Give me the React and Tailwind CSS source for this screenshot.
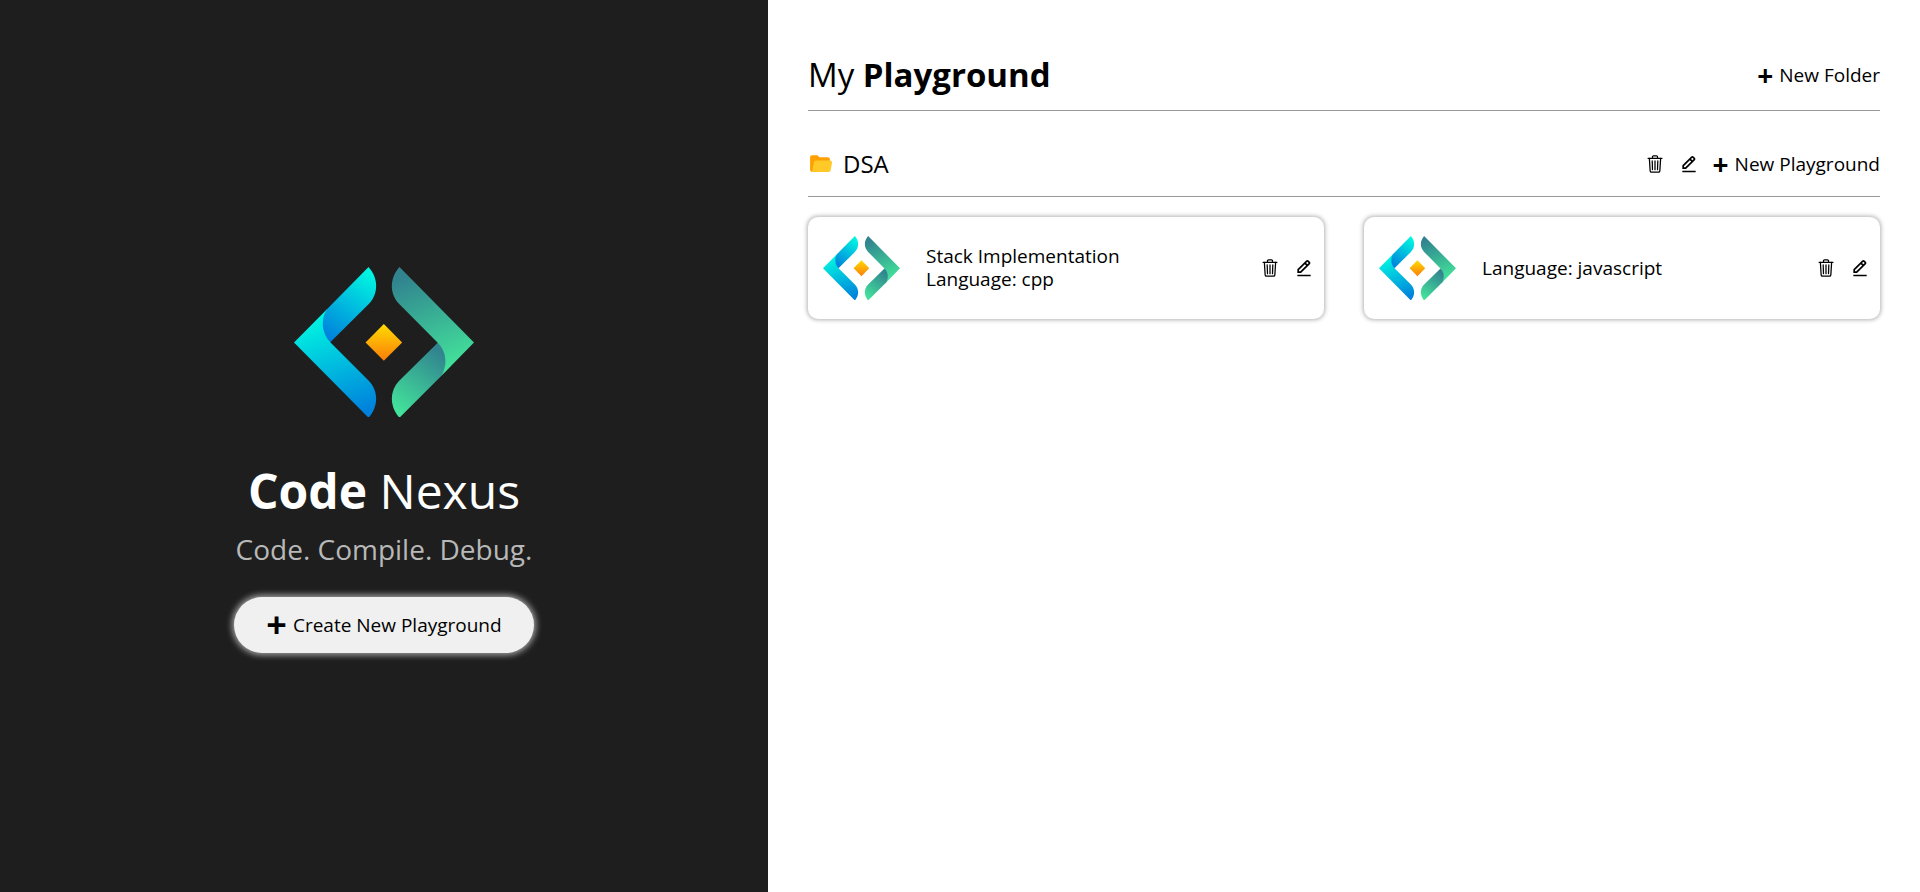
import { useId } from "react";
import { BiEditAlt } from "react-icons/bi";
import { FcOpenedFolder } from "react-icons/fc";
import { IoTrashOutline } from "react-icons/io5";

function Logo({ className }) {
  const id = useId();
  return (
    <svg viewBox="39 47 541 453" className={className} role="img" aria-label="Code Nexus logo">
      <defs>
        <linearGradient id={id + "a"} gradientUnits="userSpaceOnUse" x1="110" y1="195" x2="220" y2="490">
          <stop offset="0" stopColor="#00f5e1" />
          <stop offset="1" stopColor="#0082dc" />
        </linearGradient>
        <linearGradient id={id + "b"} gradientUnits="userSpaceOnUse" x1="265" y1="65" x2="140" y2="255">
          <stop offset="0" stopColor="#00f5e1" />
          <stop offset="1" stopColor="#0082dc" />
        </linearGradient>
        <linearGradient id={id + "c"} gradientUnits="userSpaceOnUse" x1="380" y1="75" x2="490" y2="360">
          <stop offset="0" stopColor="#31848f" />
          <stop offset="1" stopColor="#43e39b" />
        </linearGradient>
        <linearGradient id={id + "d"} gradientUnits="userSpaceOnUse" x1="480" y1="305" x2="355" y2="485">
          <stop offset="0" stopColor="#31848f" />
          <stop offset="1" stopColor="#43e39b" />
        </linearGradient>
        <linearGradient id={id + "e"} x1="0" y1="0" x2="0" y2="1">
          <stop offset="0" stopColor="#ffdc00" />
          <stop offset="1" stopColor="#fa7d0a" />
        </linearGradient>
      </defs>
      <path fill={`url(#${id}a)`} d="M39 274 L138 174 L155 200 L148 273 L263 388 C293 418 294 466 263 500 Z" />
      <path fill={`url(#${id}b)`} d="M263 47 C294 81 293 129 263 159 L148 273 C122 246 118 206 138 174 Z" />
      <path fill={`url(#${id}c)`} d="M580 274 L483 373 L465 350 L471 275 L356 159 C326 129 325 81 356 47 Z" />
      <path fill={`url(#${id}d)`} d="M356 500 C325 466 326 418 356 388 L471 275 C497 301 501 341 483 373 Z" />
      <path fill={`url(#${id}e)`} d="M309 218 L364 274 L309 329 L254 274 Z" />
    </svg>
  );
}

function ItemActions({ name }) {
  return (
    <div className="flex items-center gap-3.5">
      <button type="button" aria-label={`Delete ${name}`}>
        <IoTrashOutline className="size-5" />
      </button>
      <button type="button" aria-label={`Edit ${name}`}>
        <BiEditAlt className="size-5" />
      </button>
    </div>
  );
}

function AddButton({ children }) {
  return (
    <button type="button" className="flex items-center gap-1.5 text-[19px] leading-6">
      <span className="text-[28px] font-bold leading-6">+</span>
      {children}
    </button>
  );
}

function PlaygroundCard({ title, language }) {
  return (
    <article className="flex min-h-[102px] items-center rounded-[10px] pr-2.5 pl-[15px] shadow-[0_0_4px_1px_rgba(0,0,0,0.3)]">
      <Logo className="w-[77px] shrink-0" />
      <div className="ml-[26px] grow text-[19px] leading-[23px]">
        {title && <h3>{title}</h3>}
        <p>Language: {language}</p>
      </div>
      <ItemActions name={title || language} />
    </article>
  );
}

export default function App() {
  return (
    <div className="flex min-h-screen bg-white font-['Open_Sans','Noto_Sans',sans-serif] text-black">
      <aside className="flex w-2/5 flex-col items-center justify-center bg-[#1e1e1e] pt-7">
        <Logo className="w-[180px]" />
        <h1 className="mt-11 text-5xl leading-[60px] text-white">
          <b>Code</b> Nexus
        </h1>
        <p className="mt-2 text-[28px] leading-10 text-[#b8b8b8]">Code. Compile. Debug.</p>
        <button
          type="button"
          className="mt-7 flex h-14 items-center gap-1.5 rounded-full bg-[#f0f0f0] px-8 text-[19px] shadow-[0_0_6px_2px_rgba(255,255,255,0.6)]"
        >
          <span className="text-4xl font-bold leading-8">+</span>
          Create New Playground
        </button>
      </aside>
      <main className="w-3/5 px-10 pt-10">
        <header className="flex h-[71px] items-center justify-between border-b border-[#989898]">
          <h2 className="text-[33px]">
            My <b>Playground</b>
          </h2>
          <AddButton>New Folder</AddButton>
        </header>
        <section className="mt-5">
          <div className="flex h-[66px] items-center justify-between border-b border-[#989898]">
            <h3 className="flex items-center gap-2.5 text-2xl">
              <FcOpenedFolder className="size-[25px]" />
              DSA
            </h3>
            <div className="flex items-center gap-3.5">
              <ItemActions name="DSA" />
              <AddButton>New Playground</AddButton>
            </div>
          </div>
          <div className="mt-5 grid grid-cols-2 gap-10">
            <PlaygroundCard title="Stack Implementation" language="cpp" />
            <PlaygroundCard language="javascript" />
          </div>
        </section>
      </main>
    </div>
  );
}
